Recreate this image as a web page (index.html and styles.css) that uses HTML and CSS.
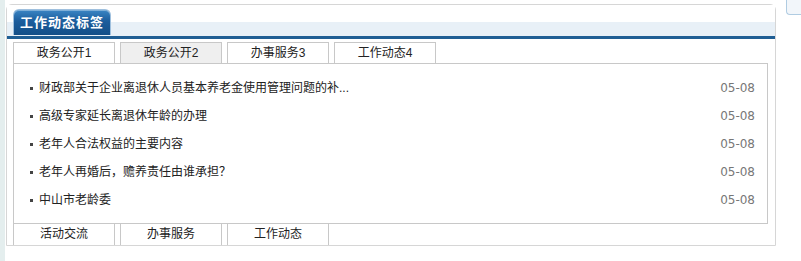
FILE: index.html
```html
<!DOCTYPE html>
<html>
<head>
    <meta charset="utf-8">
    <link rel="stylesheet" href="styles.css">
</head>
<body>
    <div class="page">
        <div class="side"></div>

        <div class="panel">
            <div class="panel-head">
                <div class="head-tab">工作动态标签</div>
            </div>

            <div class="tabs">
                <div class="tab">政务公开1</div>
                <div class="tab active">政务公开2</div>
                <div class="tab">办事服务3</div>
                <div class="tab">工作动态4</div>
            </div>

            <div class="news-box">
                <ul class="news-list">
                    <li class="news-item"><span class="dot"></span><span class="news-title">财政部关于企业离退休人员基本养老金使用管理问题的补...</span><span class="news-date">05-08</span></li>
                    <li class="news-item"><span class="dot"></span><span class="news-title">高级专家延长离退休年龄的办理</span><span class="news-date">05-08</span></li>
                    <li class="news-item"><span class="dot"></span><span class="news-title">老年人合法权益的主要内容</span><span class="news-date">05-08</span></li>
                    <li class="news-item"><span class="dot"></span><span class="news-title">老年人再婚后，赡养责任由谁承担？</span><span class="news-date">05-08</span></li>
                    <li class="news-item"><span class="dot"></span><span class="news-title">中山市老龄委</span><span class="news-date">05-08</span></li>
                </ul>
            </div>

            <div class="tabs tabs-bottom">
                <div class="tab">活动交流</div>
                <div class="tab">办事服务</div>
                <div class="tab">工作动态</div>
            </div>
        </div>

        <div class="corner-box"></div>
    </div>
</body>
</html>
```

FILE: styles.css
```css
body {
    margin: 0;
    padding: 0;
    background: #fff;
    font-family: "Liberation Sans", "Noto Sans CJK SC", sans-serif;
    font-size: 12px;
    color: #333;
}

.page {
    display: flex;
    align-items: flex-start;
    height: 261px;
    overflow: hidden;
}

.side {
    flex-shrink: 0;
    width: 5px;
    height: 261px;
    background: #e4eeee;
}

.panel {
    flex-shrink: 0;
    margin-left: 1px;
    margin-top: 4px;
    width: 768px;
    height: 240px;
    border: 1px solid #d6d6d6;
    border-radius: 6px 6px 0 0;
}

/* header strip with the blue title tab */
.panel-head {
    display: flex;
    height: 27px;
    padding: 4px 0 0 6px;
    background: linear-gradient(#fff 0, #fff 17px, #e8f0f7 17px);
    border-bottom: 3px solid #1f5e94;
}

.head-tab {
    width: 96px;
    height: 25px;
    line-height: 26px;
    text-align: center;
    color: #fff;
    font-size: 13px;
    font-weight: bold;
    letter-spacing: 1px;
    background: linear-gradient(#3a85c4 0%, #1c5d9c 45%, #134f88 100%);
    border: 1px solid #9fc0de;
    border-bottom: none;
    border-radius: 6px 6px 0 0;
    box-shadow: inset 0 1px 0 rgba(255,255,255,0.35);
}

.tabs {
    display: flex;
    gap: 5px;
    margin: 3px 0 0 6px;
}

.tab {
    width: 100px;
    height: 20px;
    line-height: 20px;
    text-align: center;
    color: #222;
    border: 1px solid #c8c8c8;
    border-bottom: none;
    background: #fff;
}

.tab.active {
    background: #efefef;
}

.news-box {
    margin-left: 6px;
    width: 753px;
    height: 159px;
    border: 1px solid #c8c8c8;
}

.news-list {
    list-style: none;
    margin: 0;
    padding: 10px 12px 0 16px;
}

.news-item {
    display: flex;
    align-items: baseline;
    height: 28px;
    line-height: 28px;
}

.dot {
    align-self: center;
    width: 3px;
    height: 3px;
    background: #444;
    margin-right: 6px;
}

.news-title {
    flex: 1;
    color: #222;
}

.news-date {
    font-family: "DejaVu Sans", sans-serif;
    color: #777;
}

.tabs-bottom {
    margin-top: 0;
}

.tabs-bottom .tab {
    height: 21px;
    border-top: none;
}

.corner-box {
    flex-shrink: 0;
    margin-left: 10px;
    width: 14px;
    height: 14px;
    border: 1px solid #b0cce2;
    border-top: none;
    border-right: none;
    border-radius: 0 0 0 4px;
    background: #f2f6fa;
}
```
